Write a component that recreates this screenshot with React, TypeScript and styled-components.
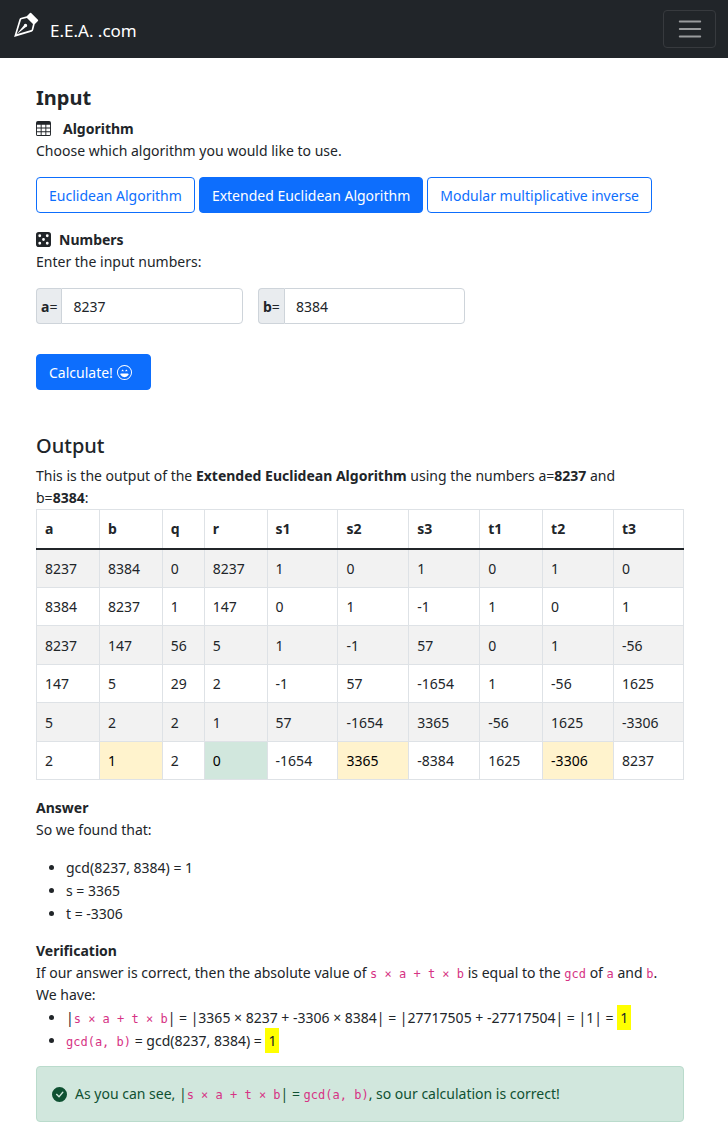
import React, { useState } from "react";
import styled, { createGlobalStyle } from "styled-components";
import {
  BsCheckCircleFill,
  BsDice5Fill,
  BsEmojiLaughing,
  BsTable,
  BsVectorPen,
} from "react-icons/bs";

const GlobalStyle = createGlobalStyle`
  *, *::before, *::after { box-sizing: border-box; }
  body {
    margin: 0;
    background: #fff;
    color: #212529;
    font-family: "Segoe UI", "Noto Sans", "Open Sans", sans-serif;
    font-size: 14px;
    line-height: 22px;
  }
`;

const Navbar = styled.header`
  display: flex;
  align-items: center;
  justify-content: space-between;
  height: 58px;
  padding: 0 12px;
  background: #212529;
`;

const Brand = styled.a`
  display: flex;
  align-items: flex-start;
  gap: 11px;
  padding-top: 4px;
  color: #fff;
  text-decoration: none;
  font-size: 17px;
  line-height: 38px;

  svg {
    width: 27px;
    height: 27px;
  }
`;

const Toggler = styled.button`
  display: flex;
  align-items: center;
  justify-content: center;
  width: 53px;
  height: 38px;
  padding: 0;
  border: 1px solid #373a3e;
  border-radius: 4px;
  background: transparent;
`;

const Page = styled.main`
  padding: 28px 44px 26px 36px;
`;

const Title = styled.h1<{ $weight: number }>`
  margin: 0 0 7px;
  font-size: 20px;
  line-height: 24px;
  font-weight: ${(p) => p.$weight};
`;

const Subtitle = styled.h2<{ $gap?: number }>`
  display: flex;
  align-items: center;
  gap: ${(p) => p.$gap ?? 0}px;
  margin: 0;
  font-size: 14px;
  line-height: 23px;
  font-weight: 700;

  svg {
    width: 15px;
    height: 15px;
  }
`;

const Text = styled.p`
  margin: 0;
`;

const Choices = styled.div`
  display: flex;
  flex-wrap: wrap;
  gap: 4px;
  margin: 15px 0;
`;

const Button = styled.button<{ $filled?: boolean }>`
  display: inline-flex;
  align-items: center;
  gap: 4px;
  height: 36px;
  padding: 1px 12px 0;
  border: 1px solid #0d6efd;
  border-radius: 4px;
  background: ${(p) => (p.$filled ? "#0d6efd" : "#fff")};
  color: ${(p) => (p.$filled ? "#fff" : "#0d6efd")};
  font: inherit;
  white-space: nowrap;

  svg {
    width: 15px;
    height: 15px;
    margin-right: 6px;
  }
`;

const Fields = styled.div`
  display: flex;
  flex-wrap: wrap;
  gap: 15px;
  margin: 15px 0 30px;
`;

const Field = styled.div`
  display: flex;
  width: 207px;
  height: 36px;
`;

const FieldLabel = styled.label`
  display: flex;
  align-items: center;
  padding: 1px 4px 0;
  border: 1px solid #ced4da;
  border-right: 0;
  border-radius: 4px 0 0 4px;
  background: #e9ecef;
`;

const FieldInput = styled.input`
  flex: 1;
  min-width: 0;
  padding: 1px 11px 0;
  border: 1px solid #ced4da;
  border-radius: 0 4px 4px 0;
  background: #fff;
  color: inherit;
  font: inherit;
`;

const Output = styled.section`
  margin-top: 44px;
`;

const Steps = styled.table`
  width: 100%;
  margin: 0 0 16px;
  border-collapse: collapse;
  table-layout: fixed;

  tbody tr:nth-child(odd) {
    background: #f2f2f2;
  }
  tbody tr:nth-child(odd) td {
    height: 39px;
  }
`;

const HeadCell = styled.th`
  height: 39px;
  padding: 0 8px;
  border: 1px solid #dee2e6;
  border-bottom: 2px solid #212529;
  text-align: left;
`;

const Cell = styled.td<{ $tint?: string }>`
  height: 38px;
  padding: 1px 8px 0;
  border: 1px solid #dee2e6;
  background: ${(p) => p.$tint ?? "transparent"};
  color: ${(p) => (p.$tint ? "#000" : "inherit")};
`;

const List = styled.ul<{ $top: number }>`
  margin: ${(p) => p.$top}px 0 14px;
  padding-left: 30px;
  line-height: 23px;
`;

const Code = styled.code`
  color: #d63384;
  font-family: "DejaVu Sans Mono", monospace;
  font-size: 12px;
  line-height: 1;
`;

const Mark = styled.mark`
  padding: 3px;
  background: #ff0;
  color: inherit;
`;

const Alert = styled.div`
  display: flex;
  align-items: center;
  gap: 8px;
  padding: 16px 15px;
  border: 1px solid #badbcc;
  border-radius: 4px;
  background: #d1e7dd;
  color: #0f5132;

  svg {
    flex: none;
    width: 15px;
    height: 15px;
  }
`;

const algorithms = [
  "Euclidean Algorithm",
  "Extended Euclidean Algorithm",
  "Modular multiplicative inverse",
];

const columns = [
  { name: "a", width: 63 },
  { name: "b", width: 63 },
  { name: "q", width: 42 },
  { name: "r", width: 63 },
  { name: "s1", width: 71 },
  { name: "s2", width: 71 },
  { name: "s3", width: 71 },
  { name: "t1", width: 63 },
  { name: "t2", width: 71 },
  { name: "t3", width: 70 },
];

const Column = styled.col<{ $share: number }>`
  width: ${(p) => (p.$share * 100) / 648}%;
`;

const rows = [
  [8237, 8384, 0, 8237, 1, 0, 1, 0, 1, 0],
  [8384, 8237, 1, 147, 0, 1, -1, 1, 0, 1],
  [8237, 147, 56, 5, 1, -1, 57, 0, 1, -56],
  [147, 5, 29, 2, -1, 57, -1654, 1, -56, 1625],
  [5, 2, 2, 1, 57, -1654, 3365, -56, 1625, -3306],
  [2, 1, 2, 0, -1654, 3365, -8384, 1625, -3306, 8237],
];

const resultTints: Record<number, string> = {
  1: "#fff3cd",
  3: "#d1e7dd",
  5: "#fff3cd",
  8: "#fff3cd",
};

export default function App() {
  const [selected, setSelected] = useState(1);
  const [a, setA] = useState("8237");
  const [b, setB] = useState("8384");

  return (
    <>
      <GlobalStyle />
      <Navbar>
        <Brand href="#">
          <BsVectorPen aria-hidden />
          <span>E.E.A. .com</span>
        </Brand>
        <Toggler type="button" aria-label="Toggle navigation">
          <svg width="28" height="28" viewBox="0 0 30 30" aria-hidden>
            <path
              d="M4 7h22M4 15h22M4 23h22"
              stroke="#fff"
              strokeOpacity="0.55"
              strokeWidth="2"
              strokeLinecap="round"
            />
          </svg>
        </Toggler>
      </Navbar>
      <Page>
        <Title $weight={700}>Input</Title>
        <Subtitle $gap={12}>
          <BsTable aria-hidden />
          Algorithm
        </Subtitle>
        <Text>Choose which algorithm you would like to use.</Text>
        <Choices>
          {algorithms.map((name, i) => (
            <Button
              key={name}
              type="button"
              $filled={i === selected}
              aria-pressed={i === selected}
              onClick={() => setSelected(i)}
            >
              {name}
            </Button>
          ))}
        </Choices>
        <Subtitle $gap={8}>
          <BsDice5Fill aria-hidden />
          Numbers
        </Subtitle>
        <Text>Enter the input numbers:</Text>
        <Fields>
          <Field>
            <FieldLabel htmlFor="a">
              <b>a</b>=
            </FieldLabel>
            <FieldInput id="a" value={a} onChange={(e) => setA(e.target.value)} />
          </Field>
          <Field>
            <FieldLabel htmlFor="b">
              <b>b</b>=
            </FieldLabel>
            <FieldInput id="b" value={b} onChange={(e) => setB(e.target.value)} />
          </Field>
        </Fields>
        <Button type="button" $filled>
          Calculate! <BsEmojiLaughing aria-hidden />
        </Button>

        <Output>
          <Title $weight={500}>Output</Title>
          <Text>
            This is the output of the <b>Extended Euclidean Algorithm</b> using the
            numbers a=<b>8237</b> and
            <br />
            b=<b>8384</b>:
          </Text>
          <Steps>
            <colgroup>
              {columns.map((c) => (
                <Column key={c.name} $share={c.width} />
              ))}
            </colgroup>
            <thead>
              <tr>
                {columns.map((c) => (
                  <HeadCell key={c.name} scope="col">
                    {c.name}
                  </HeadCell>
                ))}
              </tr>
            </thead>
            <tbody>
              {rows.map((row, r) => (
                <tr key={r}>
                  {row.map((value, c) => (
                    <Cell
                      key={c}
                      $tint={r === rows.length - 1 ? resultTints[c] : undefined}
                    >
                      {value}
                    </Cell>
                  ))}
                </tr>
              ))}
            </tbody>
          </Steps>

          <Subtitle>Answer</Subtitle>
          <Text>So we found that:</Text>
          <List $top={15}>
            <li>gcd(8237, 8384) = 1</li>
            <li>s = 3365</li>
            <li>t = -3306</li>
          </List>

          <Subtitle>Verification</Subtitle>
          <Text>
            If our answer is correct, then the absolute value of{" "}
            <Code>s × a + t × b</Code> is equal to the <Code>gcd</Code> of{" "}
            <Code>a</Code> and <Code>b</Code>.
            <br />
            We have:
          </Text>
          <List $top={0}>
            <li>
              |<Code>s × a + t × b</Code>| = |3365 × 8237 + -3306 × 8384| =
              |27717505 + -27717504| = |1| = <Mark>1</Mark>
            </li>
            <li>
              <Code>gcd(a, b)</Code> = gcd(8237, 8384) = <Mark>1</Mark>
            </li>
          </List>
          <Alert role="alert">
            <BsCheckCircleFill aria-hidden />
            <span>
              As you can see, |<Code>s × a + t × b</Code>| = <Code>gcd(a, b)</Code>,
              so our calculation is correct!
            </span>
          </Alert>
        </Output>
      </Page>
    </>
  );
}
